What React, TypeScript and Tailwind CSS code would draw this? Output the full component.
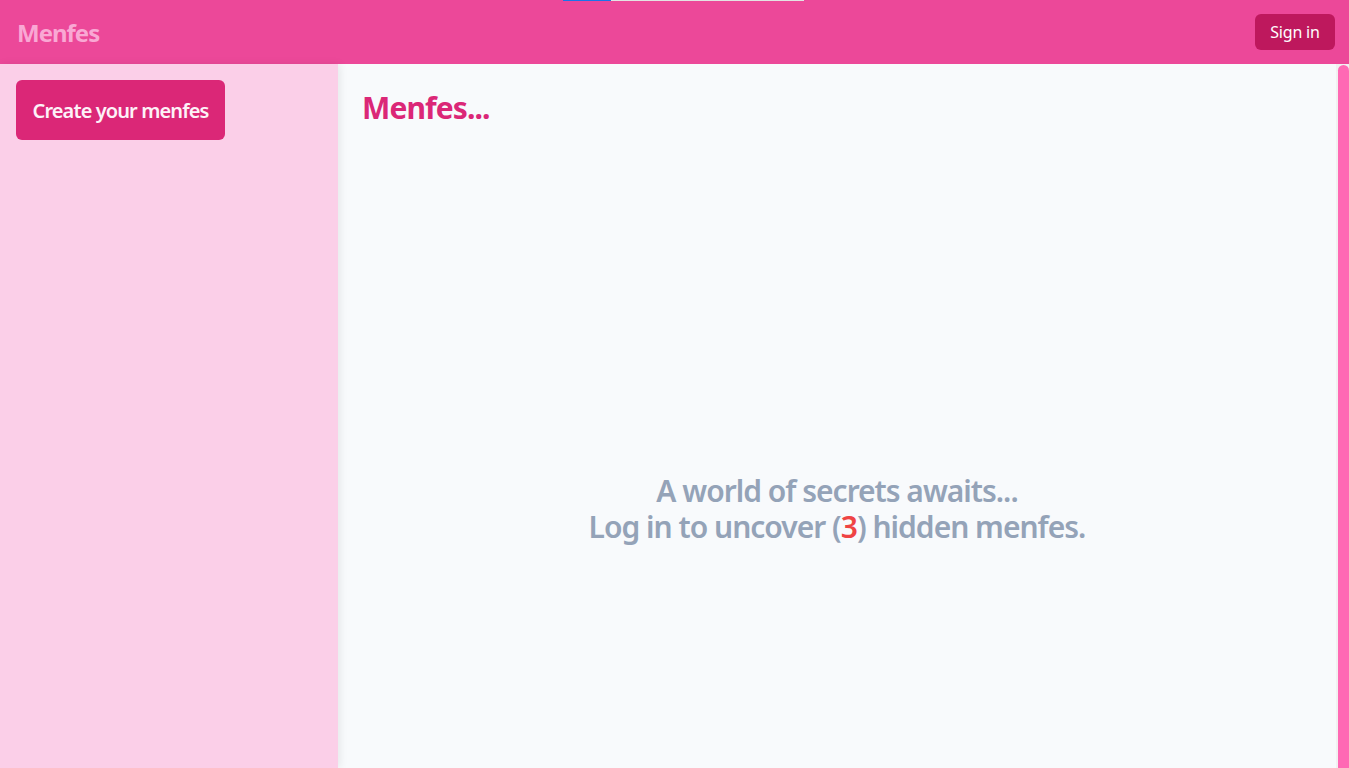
import React from "react";

export default function App() {
  const font = { fontFamily: '"Noto Sans", "Open Sans", Arial, sans-serif' };
  return (
    <div className="relative flex h-screen w-full flex-col overflow-hidden" style={font}>
      <div className="absolute left-[563px] top-0 z-20 flex h-px">
        <div className="h-px w-[48px] bg-[#1a73e8]" />
        <div className="h-px w-[193px] bg-[#e3e3e3]" />
      </div>
      <header className="flex h-16 shrink-0 items-center justify-between bg-[#ec4899] pl-[17px] pr-[14px]">
        <div className="pt-[2px] text-2xl font-bold tracking-[-1px] text-[#f9a8d4]">Menfes</div>
        <button className="h-9 w-20 rounded-md bg-[#be185d] text-base tracking-[-0.2px] text-white">Sign in</button>
      </header>
      <div className="flex min-h-0 flex-1">
        <aside className="relative z-10 w-[338px] shrink-0 bg-[#fbcfe8] p-4 shadow-[2px_0_8px_rgba(0,0,0,0.08)]">
          <button className="h-[60px] w-[209px] rounded-md bg-[#db2777] pt-[2px] text-xl font-semibold tracking-[-0.9px] text-[#fdf2f8]">
            Create your menfes
          </button>
        </aside>
        <main className="flex min-w-0 flex-1 flex-col bg-[#f8fafc]">
          <div className="px-6 pt-[26px]">
            <h1 className="text-3xl font-bold tracking-[-0.9px] text-[#db2777]">Menfes...</h1>
          </div>
          <div className="flex flex-1 flex-col items-center justify-center pt-[124px] text-center text-3xl font-semibold tracking-[-1px] text-[#94a3b8]">
            <p>A world of secrets awaits...</p>
            <p>
              Log in to uncover (<span className="text-[#ef4444]">3</span>) hidden menfes.
            </p>
          </div>
        </main>
        <div className="flex w-[13px] shrink-0 bg-[#f1f1f1] pl-[2px]">
          <div className="mt-px w-[11px] rounded-t-full bg-[#ff69b4]" />
        </div>
      </div>
    </div>
  );
}
